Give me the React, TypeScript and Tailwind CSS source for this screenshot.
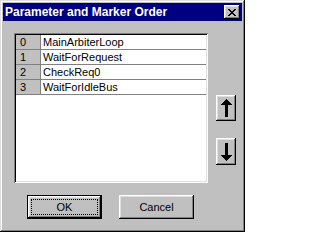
import React from "react"

const rows = ["MainArbiterLoop", "WaitForRequest", "CheckReq0", "WaitForIdleBus"]

// classic 3D bevels
const raised =
  "shadow-[inset_-1px_-1px_#000,inset_1px_1px_#fff,inset_-2px_-2px_#808080,inset_2px_2px_#dfdfdf]"
const frame =
  "shadow-[inset_-1px_-1px_#000,inset_1px_1px_#dfdfdf,inset_-2px_-2px_#808080,inset_2px_2px_#fff]"
const sunken =
  "shadow-[inset_1px_1px_#808080,inset_-1px_-1px_#fff,inset_2px_2px_#000,inset_-2px_-2px_#dfdfdf]"

const closeGlyph = [
  "XX....XX",
  ".XX..XX.",
  "..XXXX..",
  "...XX...",
  "..XXXX..",
  ".XX..XX.",
  "XX....XX",
]

function CloseIcon() {
  return (
    <svg width="8" height="7" viewBox="0 0 8 7" shapeRendering="crispEdges">
      {closeGlyph.flatMap((line, y) =>
        line.split("").map((c, x) => (c === "X" ? <rect key={`${x}-${y}`} x={x} y={y} width="1" height="1" fill="#000" /> : null)),
      )}
    </svg>
  )
}

function Arrow({ down }: { down?: boolean }) {
  return (
    <svg width="11" height="18" viewBox="0 0 11 18" shapeRendering="crispEdges" className={down ? "rotate-180" : ""}>
      <polygon points="5.5,0 0,6 11,6" fill="#000" />
      <rect x="4" y="5" width="3" height="13" fill="#000" />
    </svg>
  )
}

export default function App() {
  return (
    <div
      className={`w-[245px] h-[232px] bg-[#c0c0c0] p-[3px] flex flex-col font-['Liberation_Sans',Arial,sans-serif] text-[11px] text-black ${frame}`}
    >
      {/* Title bar */}
      <div className="h-[18px] bg-[#000080] flex items-center justify-between pl-[2px] pr-[2px]">
        <span className="text-white font-bold text-[12px] leading-none">Parameter and Marker Order</span>
        <div className={`w-[16px] h-[14px] bg-[#c0c0c0] flex items-center justify-center ${raised}`}>
          <CloseIcon />
        </div>
      </div>

      {/* Body */}
      <div className="flex-1 pl-[11px] pt-[12px]">
        <div className="flex">
          <div className={`w-[194px] h-[150px] bg-white p-[2px] ${sunken}`}>
            {rows.map((name, i) => (
              <div key={name} className="flex h-[15px] border-b border-[#808080]">
                <div className="w-[25px] bg-[#c0c0c0] border-r border-[#808080] pl-[4px] leading-[14px]">{i}</div>
                <div className="flex-1 pl-[2px] leading-[14px]">{name}</div>
              </div>
            ))}
          </div>
          <div className="ml-[8px] pt-[62px] flex flex-col gap-[17px]">
            <button className={`w-[20px] h-[26px] bg-[#c0c0c0] flex items-center justify-center ${raised}`}>
              <Arrow />
            </button>
            <button className={`w-[20px] h-[27px] bg-[#c0c0c0] flex items-center justify-center ${raised}`}>
              <Arrow down />
            </button>
          </div>
        </div>

        {/* Buttons */}
        <div className="flex gap-[17px] mt-[12px] pl-[13px]">
          <button className="w-[75px] h-[24px] bg-[#c0c0c0] border border-black p-0">
            <div className={`w-full h-full p-[3px] ${raised}`}>
              <div className="w-full h-full border border-dotted border-black flex items-center justify-center leading-none">
                OK
              </div>
            </div>
          </button>
          <button className={`w-[75px] h-[24px] bg-[#c0c0c0] flex items-center justify-center leading-none ${raised}`}>
            Cancel
          </button>
        </div>
      </div>
    </div>
  )
}
